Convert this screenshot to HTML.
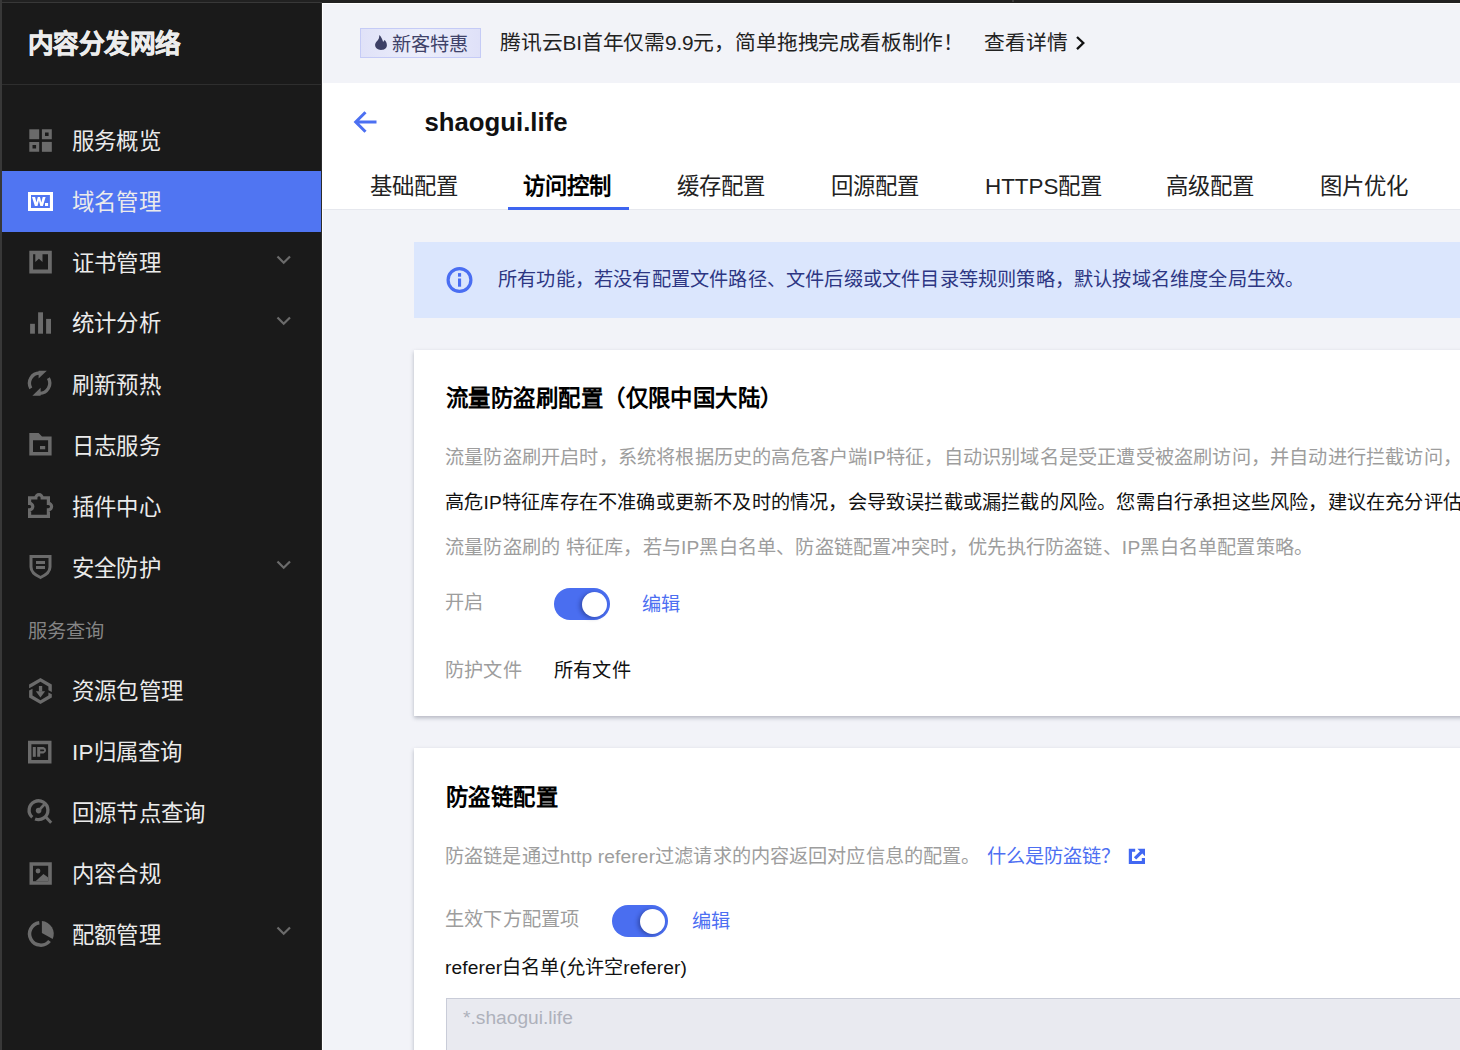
<!DOCTYPE html>
<html lang="zh-CN">
<head>
<meta charset="utf-8">
<style>
*{box-sizing:border-box;margin:0;padding:0}
html,body{width:1460px;height:1050px;overflow:hidden;background:#f2f3f8;font-family:"Liberation Sans",sans-serif}
.abs{position:absolute;white-space:nowrap;line-height:1}
#topbar{position:absolute;left:0;top:0;width:1460px;height:3px;background:#212121;z-index:5}
#side{position:absolute;left:0;top:0;width:322px;height:1050px;background:#1a1a1a}
#side .rb{position:absolute;left:321px;top:0;width:1px;height:1050px;background:#2c2c2c;z-index:4}
.wcol{position:absolute;left:322px;top:3px;width:1px;height:1047px;background:#fff;z-index:4}
.tmark{position:absolute;left:1012px;top:0;width:2px;height:2px;background:#3a3a3a;z-index:6}
#side .lb{position:absolute;left:0;top:0;width:2px;height:1050px;background:#383838;z-index:6}
#side .tl{position:absolute;left:0;top:2px;width:322px;height:1px;background:#383838;z-index:6}
#side .hd{position:absolute;left:2px;top:84px;width:319px;height:1px;background:#2e2e2e}
#side .sico{position:absolute;left:0;top:0}
.title{left:27.5px;top:32px;font-size:25.6px;letter-spacing:-0.45px;font-weight:bold;color:#ececec;-webkit-text-stroke:0.6px #ececec}
.mi{position:absolute;left:2px;width:320px;height:61px}
.mi.act{background:#5075f2}
.mt{left:72px;font-size:22.4px;letter-spacing:0.2px;color:#ebebeb}
.grp{left:28px;top:622px;font-size:19.2px;color:#858585}
#banner{position:absolute;left:322px;top:3px;width:1138px;height:80px;background:#f2f3f8;border-left:1px solid #fff;border-top:1px solid #fff}
#banner .abs{position:absolute}
.tag{position:absolute;left:360px;top:28px;width:121px;height:30px;border:1px solid #c5cbf6;background:linear-gradient(90deg,#e0e2f8,#eceefb 50%,#dfe1f8)}
.tagt{left:392px;top:35px;font-size:19.2px;color:#3f4269}
.bt{left:500px;top:33px;font-size:20.8px;letter-spacing:-0.18px;color:#222}
.bt2{left:984px;top:33px;font-size:20.8px;color:#222}
#head{position:absolute;left:322px;top:83px;width:1138px;height:127px;background:#fff;border-bottom:1px solid #e6e8ee}
.dom{left:424.5px;top:109.5px;font-size:25.75px;font-weight:bold;color:#111}
.tab{top:176px;font-size:22.4px;color:#222}
.tab.on{font-weight:bold;color:#000}
.uline{position:absolute;left:508px;top:207px;width:121px;height:3px;background:#3e65f0}
#info{position:absolute;left:414px;top:242px;width:1046px;height:76px;background:#dbe6fd}
.infot{left:498px;top:270px;font-size:19.2px;letter-spacing:0.2px;color:#2d3683}
.card{position:absolute;left:414px;width:1100px;background:#fff;box-shadow:0 2px 4px rgba(40,45,70,.3)}
.ctitle{left:446px;font-size:22.4px;letter-spacing:0.45px;font-weight:bold;color:#000}
.para{left:445px;font-size:19.2px;letter-spacing:0.2px}
.g{color:#9d9d9d}
.k{color:#111}
.lk{color:#4d6ff2}
.tog{position:absolute;width:56px;height:32px;border-radius:16px;background:#4a6ef0}
.tog i{position:absolute;left:27.8px;top:3.6px;width:25px;height:25px;border-radius:50%;background:#fff;box-shadow:-2px 1px 4px rgba(20,30,90,.45)}
.ta{position:absolute;left:446px;top:998px;width:1100px;height:120px;background:#e9eaf0;border:1px solid #c9ccd8}
.ta span{position:absolute;left:16px;top:8.5px;font-size:19.2px;line-height:1;color:#aeb1bb;white-space:nowrap}
</style>
</head>
<body>
<div id="banner"></div>
  <div class="tag"></div>
  <svg class="abs" style="left:374px;top:34px" width="14" height="17" viewBox="374 34 14 17"><path fill="#3d4066" d="M379.4,35.1C381,36.8 382.3,39 383.1,41.9L384.5,40.1C386,41.5 386.9,43.3 386.9,45.2C386.9,48.2 384.3,49.9 381,49.9C377.6,49.9 375.1,48 375.1,45.1C375.1,41.9 378.6,40.6 379,37.8Z"/></svg>
  <div class="abs tagt">新客特惠</div>
  <div class="abs bt">腾讯云BI首年仅需9.9元，简单拖拽完成看板制作！</div>
  <div class="abs bt2">查看详情</div>
  <svg class="abs" style="left:1074px;top:36px" width="13" height="15" viewBox="1074 36 13 15"><path fill="none" stroke="#111" stroke-width="2.3" d="M1077,37L1083.3,43L1077,49.1"/></svg>
<div id="head"></div>
  <svg class="abs" style="left:352px;top:109px" width="27" height="27" viewBox="352 109 27 27"><path fill="none" stroke="#4c70f2" stroke-width="3" stroke-linejoin="miter" d="M376.5,122H356.5M365.5,112.2L355.7,122L365.5,131.8"/></svg>
  <div class="abs dom">shaogui.life</div>
  <div class="abs tab" style="left:370px">基础配置</div>
  <div class="abs tab on" style="left:523px">访问控制</div>
  <div class="abs tab" style="left:677px">缓存配置</div>
  <div class="abs tab" style="left:831px">回源配置</div>
  <div class="abs tab" style="left:985px">HTTPS配置</div>
  <div class="abs tab" style="left:1166px">高级配置</div>
  <div class="abs tab" style="left:1320px">图片优化</div>
  <div class="abs uline"></div>
<div id="info"></div>
  <svg class="abs" style="left:445px;top:266px" width="29" height="29" viewBox="445 266 29 29"><circle cx="459.5" cy="280" r="11.4" fill="none" stroke="#4a6ef2" stroke-width="3.2"/><rect x="458" y="273.1" width="3.1" height="3.6" fill="#4a6ef2"/><rect x="458" y="278.5" width="3.1" height="8.2" fill="#4a6ef2"/></svg>
  <div class="abs infot">所有功能，若没有配置文件路径、文件后缀或文件目录等规则策略，默认按域名维度全局生效。</div>
<div class="card" style="top:350px;height:366px"></div>
<div class="abs ctitle" style="top:388px">流量防盗刷配置（仅限中国大陆）</div>
<div class="abs para g" style="top:448px">流量防盗刷开启时，系统将根据历史的高危客户端IP特征，自动识别域名是受正遭受被盗刷访问，并自动进行拦截访问，</div>
<div class="abs para k" style="top:493px">高危IP特征库存在不准确或更新不及时的情况，会导致误拦截或漏拦截的风险。您需自行承担这些风险，建议在充分评估</div>
<div class="abs para g" style="top:538px">流量防盗刷的 特征库，若与IP黑白名单、防盗链配置冲突时，优先执行防盗链、IP黑白名单配置策略。</div>
<div class="abs para g" style="top:593px;left:445px">开启</div>
<div class="tog" style="left:554px;top:588px"><i></i></div>
<div class="abs para lk" style="top:595px;left:642px">编辑</div>
<div class="abs para g" style="top:661px;left:445px">防护文件</div>
<div class="abs para k" style="top:661px;left:554px">所有文件</div>

<div class="card" style="top:748px;height:400px"></div>
<div class="abs ctitle" style="top:787px">防盗链配置</div>
<div class="abs para g" style="top:847px;letter-spacing:0.13px">防盗链是通过http referer过滤请求的内容返回对应信息的配置。</div><div class="abs para lk" style="top:847px;left:987px;letter-spacing:0">什么是防盗链？</div>
<svg class="abs" style="left:1128px;top:847px" width="19" height="19" viewBox="1128 847 19 19"><path fill="#4268f2" d="M1128.8,848.7h6.4v3h-3.2v9.3h9.8v-3h3.2v5.9h-16.2z"/><path fill="#4268f2" d="M1137.4,848.7H1145V856.2L1142.3,853.5L1136.2,859.5L1133.9,857.3L1140,851.3Z"/></svg>
<div class="abs para g" style="top:910px;left:445px">生效下方配置项</div>
<div class="tog" style="left:612px;top:905px"><i></i></div>
<div class="abs para lk" style="top:911.5px;left:692px">编辑</div>
<div class="abs para k" style="top:958px;left:445px;letter-spacing:0.1px">referer白名单(允许空referer)</div>
<div class="ta"><span>*.shaogui.life</span></div>
<div id="side">
  <div class="tl"></div>
  <div class="lb"></div>
  <div class="hd"></div>
  <div class="rb"></div>
  <div class="abs title">内容分发网络</div>
  <div class="mi act" style="top:171px"></div>
  <div class="abs mt" style="top:131px">服务概览</div>
  <div class="abs mt" style="top:192px">域名管理</div>
  <div class="abs mt" style="top:253px">证书管理</div>
  <div class="abs mt" style="top:313px">统计分析</div>
  <div class="abs mt" style="top:375px">刷新预热</div>
  <div class="abs mt" style="top:436px">日志服务</div>
  <div class="abs mt" style="top:497px">插件中心</div>
  <div class="abs mt" style="top:558px">安全防护</div>
  <div class="abs grp">服务查询</div>
  <div class="abs mt" style="top:681px">资源包管理</div>
  <div class="abs mt" style="top:742px">IP归属查询</div>
  <div class="abs mt" style="top:803px">回源节点查询</div>
  <div class="abs mt" style="top:864px">内容合规</div>
  <div class="abs mt" style="top:925px">配额管理</div>
  <svg class="sico" width="322" height="1050" viewBox="0 0 322 1050">
    <g fill="#6b6b6b">
      <!-- grid -->
      <rect x="29.3" y="129.3" width="9.9" height="9.9"/>
      <path fill-rule="evenodd" d="M41.9,129.3h9.9v9.9h-9.9z M45,132.4h3.6v3.6h-3.6z"/>
      <path fill-rule="evenodd" d="M29.3,141.9h9.9v9.9h-9.9z M32.5,145h3.6v3.6h-3.6z"/>
      <rect x="41.9" y="141.9" width="9.9" height="9.9"/>
      <!-- bars -->
      <rect x="30.1" y="323.8" width="4.8" height="9.9"/>
      <rect x="38.1" y="312.3" width="4.9" height="21.4"/>
      <rect x="46.1" y="318.9" width="4.9" height="14.8"/>
      <!-- cert -->
      <path fill-rule="evenodd" d="M29.3,250.7h22.5v22.7h-22.5z M33.1,254.3v15.3h14.9v-15.3h-5.5v7.8l-3.6,-3.4l-3.6,3.4v-7.8z"/>
      <!-- refresh arrows -->
      <path d="M38.6,370.7h8.2l-8.2,7.9z"/>
      <path d="M40.6,395.7h-8.2l8.2,-7.9z"/>
      <!-- folder -->
      <path fill-rule="evenodd" d="M29.3,433h9.3l3.4,3.4h9.6v19.1h-22.3z M33,440.2v11.7h15.1v-11.7z"/>
      <rect x="40" y="446" width="5.2" height="3.3"/>
      <!-- IP -->
      <path fill-rule="evenodd" d="M28,740.8h23.5v22.7h-23.5z M31.4,744.2v15.9h16.7v-15.9z"/>
      <rect x="32.8" y="747" width="3" height="9.8"/>
      <path d="M37.2,747h6.3a3.4,3.4 0 0 1 0,6.6h-3.3v3.2h-3z M40.2,749.4v1.9h3a0.95,0.95 0 0 0 0,-1.9z" fill-rule="evenodd"/>
      <!-- image -->
      <path fill-rule="evenodd" d="M29.5,862.2h22.3v22.6h-22.3z M33,865.8v15.5h15.2v-15.5z"/>
      <circle cx="38" cy="871" r="2.4"/>
      <path d="M35.5,881.3l8,-7.3l4.7,3.6v3.7z"/>
      <!-- pie wedge -->
      <path d="M41.9,921A12.9,12.9 0 0 1 52.7,939L41.9,933.1Z"/>
      <!-- hexagon -->
      <path d="M29.1,688.2L29.1,684.5L40.45,678L51.8,684.5L51.8,691.9L48.4,690.2L48.4,686.4L40.45,681.8L32.5,686.4Z"/>
      <path d="M29.1,690.5L29.1,697.5L40.45,704L51.8,697.5L51.8,694.3L48.4,692.6L48.4,695.6L40.45,700.2L32.5,695.6L32.5,688.8Z"/>
      <!-- hexagon arrow -->
      <rect x="38.9" y="686" width="3.3" height="5.6"/>
      <path d="M35.8,691.2h9.3l-4.65,6.2z"/>
      <!-- gauge dot -->
      <circle cx="38.6" cy="810.6" r="2.8"/>
      <!-- W. -->
      <path fill="#fff" fill-rule="evenodd" d="M28,192h25v19h-25z M31,195v12.9h18.9v-12.9z"/>
      <path fill="#fff" d="M32,197h3.1l1.35,5.6l1.35,-5.6h2.2l1.35,5.6l1.35,-5.6h2.9l-2.7,9h-2.6l-1.4,-5.4l-1.4,5.4h-2.6z"/>
      <rect fill="#fff" x="45" y="203" width="3.1" height="3"/>
    </g>
    <g fill="none" stroke="#6b6b6b">
      <!-- refresh arcs -->
      <path stroke-width="3.3" d="M30.8,388.3 A10.2,10.2 0 0 1 39.6,373"/>
      <path stroke-width="3.3" d="M48.4,378.1 A10.2,10.2 0 0 1 39.6,393.4"/>
      <!-- puzzle -->
      <path stroke-width="3.2" stroke-linejoin="miter" d="M29.6,497.8H35.8A3.2,3.2 0 0 1 42.2,497.8H48.4V503.4A3.2,3.2 0 0 1 48.4,509.8V516.4H29.6V509.8A3.2,3.2 0 0 0 29.6,503.4Z"/>
      <!-- shield -->
      <path stroke-width="3" d="M31,556.5H50V567C50,572 45,575.5 40.5,577.5C36,575.5 31,572 31,567Z"/>
      <!-- hexagon -->
      <!-- gauge -->
      <path stroke-width="3.3" d="M32.3,817.3A9.4,9.4 0 1 1 35.1,819"/>
      <path stroke-width="2.6" d="M38.6,810.6L44.3,804.5"/>
      <path stroke-width="3" d="M45.8,817L51.2,822.8"/>
      <!-- pie ring -->
      <path stroke-width="3.5" d="M39.3,922.75A11.25,11.25 0 1 0 49.52,941.01"/>
      <!-- chevrons -->
      <path stroke-width="2.2" d="M277.5,256.5L283.7,262.7L290,256.5"/>
      <path stroke-width="2.2" d="M277.5,317.5L283.7,323.7L290,317.5"/>
      <path stroke-width="2.2" d="M277.5,561.5L283.7,567.7L290,561.5"/>
      <path stroke-width="2.2" d="M277.5,927.5L283.7,933.7L290,927.5"/>
      <!-- shield bars -->
      <path stroke="#6b6b6b" stroke-width="3" d="M36,562.5H45M36,567.4H45"/>
    </g>
  </svg>
</div>
<div id="topbar"></div>
<div class="tmark"></div>
<div class="wcol"></div>
</body>
</html>
